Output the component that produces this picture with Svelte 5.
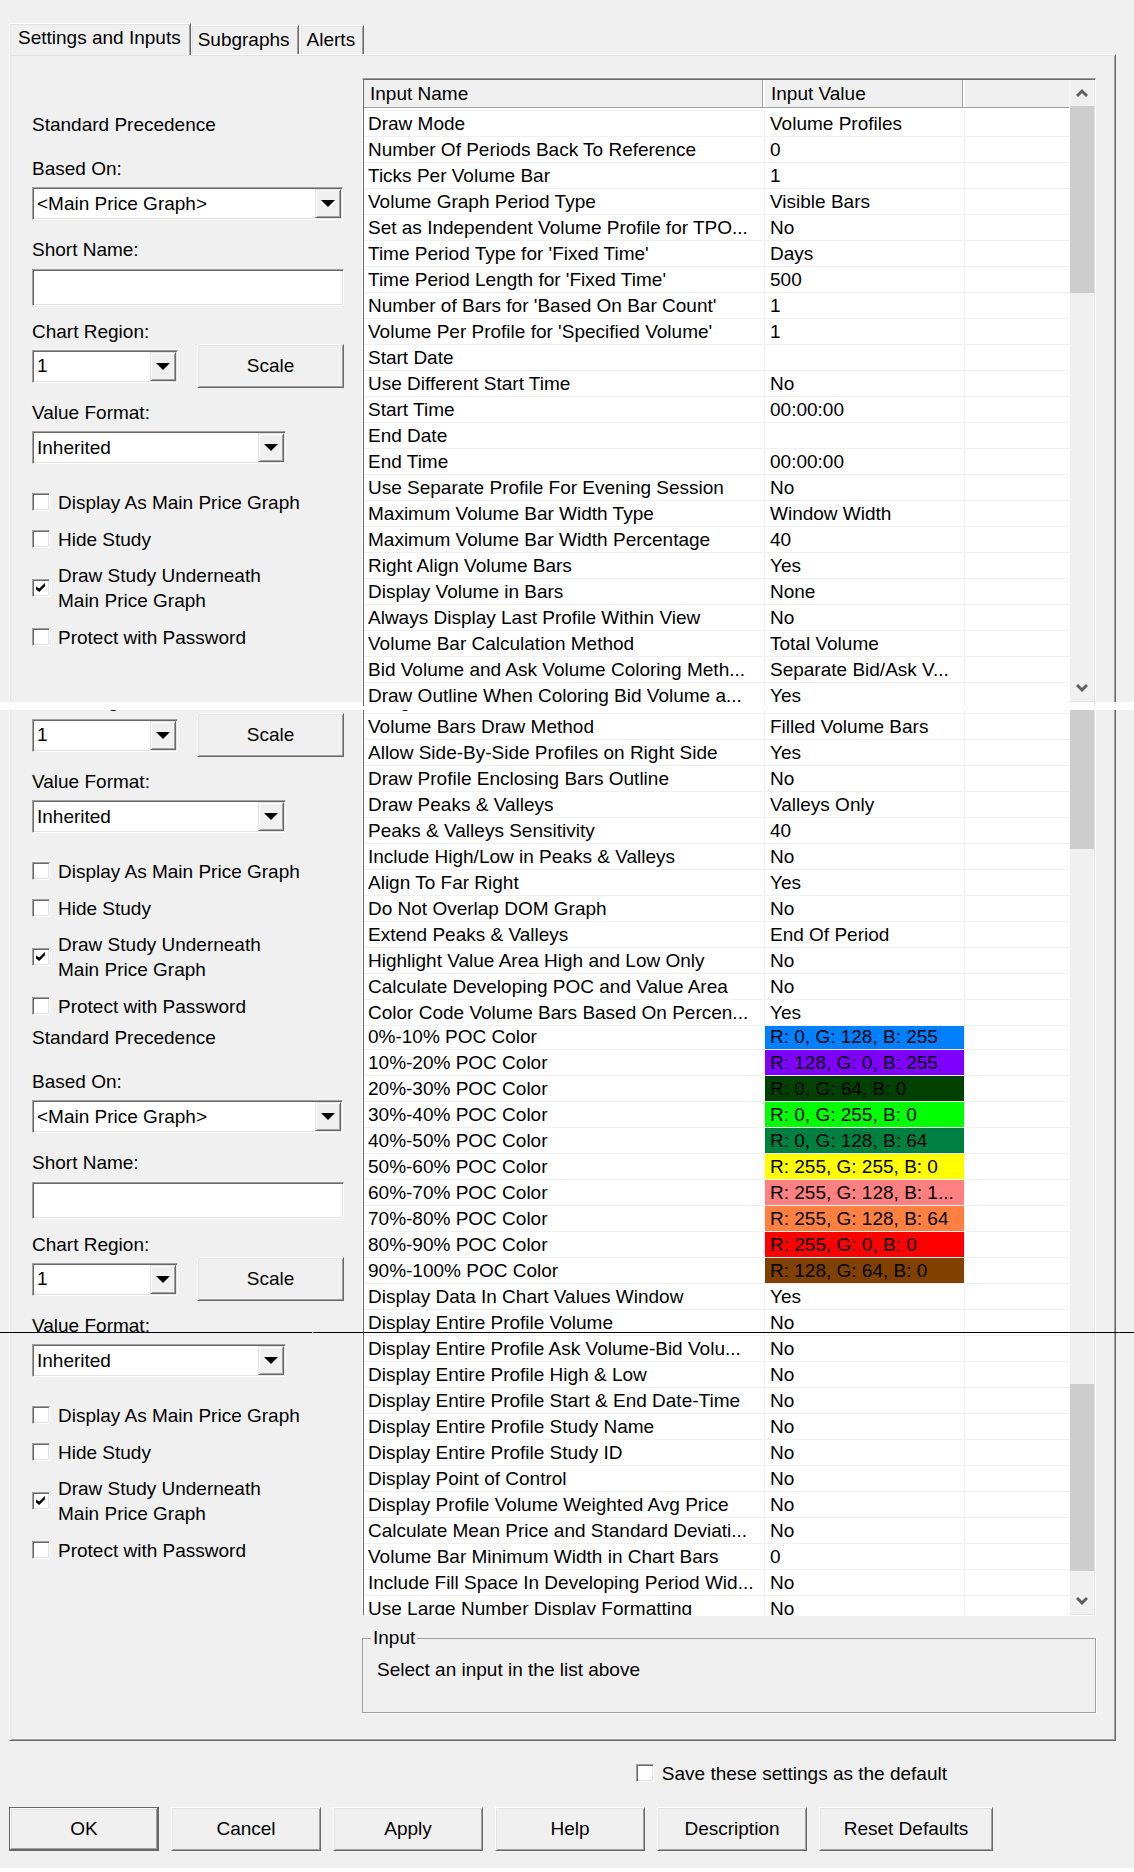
<script>
  const rowsTop = [
    ['Draw Mode', 'Volume Profiles'],
    ['Number Of Periods Back To Reference', '0'],
    ['Ticks Per Volume Bar', '1'],
    ['Volume Graph Period Type', 'Visible Bars'],
    ['Set as Independent Volume Profile for TPO...', 'No'],
    ["Time Period Type for 'Fixed Time'", 'Days'],
    ["Time Period Length for 'Fixed Time'", '500'],
    ["Number of Bars for 'Based On Bar Count'", '1'],
    ["Volume Per Profile for 'Specified Volume'", '1'],
    ['Start Date', ''],
    ['Use Different Start Time', 'No'],
    ['Start Time', '00:00:00'],
    ['End Date', ''],
    ['End Time', '00:00:00'],
    ['Use Separate Profile For Evening Session', 'No'],
    ['Maximum Volume Bar Width Type', 'Window Width'],
    ['Maximum Volume Bar Width Percentage', '40'],
    ['Right Align Volume Bars', 'Yes'],
    ['Display Volume in Bars', 'None'],
    ['Always Display Last Profile Within View', 'No'],
    ['Volume Bar Calculation Method', 'Total Volume'],
    ['Bid Volume and Ask Volume Coloring Meth...', 'Separate Bid/Ask V...'],
    ['Draw Outline When Coloring Bid Volume a...', 'Yes']
  ];
  const rowsMiddle = [
    ['Length', ''],
    ['Volume Bars Draw Method', 'Filled Volume Bars'],
    ['Allow Side-By-Side Profiles on Right Side', 'Yes'],
    ['Draw Profile Enclosing Bars Outline', 'No'],
    ['Draw Peaks & Valleys', 'Valleys Only'],
    ['Peaks & Valleys Sensitivity', '40'],
    ['Include High/Low in Peaks & Valleys', 'No'],
    ['Align To Far Right', 'Yes'],
    ['Do Not Overlap DOM Graph', 'No'],
    ['Extend Peaks & Valleys', 'End Of Period'],
    ['Highlight Value Area High and Low Only', 'No'],
    ['Calculate Developing POC and Value Area', 'No'],
    ['Color Code Volume Bars Based On Percen...', 'Yes']
  ];
  const rowsBottom = [
    ['0%-10% POC Color', 'R: 0, G: 128, B: 255', '#0080ff'],
    ['10%-20% POC Color', 'R: 128, G: 0, B: 255', '#8000ff'],
    ['20%-30% POC Color', 'R: 0, G: 64, B: 0', '#004000'],
    ['30%-40% POC Color', 'R: 0, G: 255, B: 0', '#00ff00'],
    ['40%-50% POC Color', 'R: 0, G: 128, B: 64', '#008040'],
    ['50%-60% POC Color', 'R: 255, G: 255, B: 0', '#ffff00'],
    ['60%-70% POC Color', 'R: 255, G: 128, B: 1...', '#ff8080'],
    ['70%-80% POC Color', 'R: 255, G: 128, B: 64', '#ff8040'],
    ['80%-90% POC Color', 'R: 255, G: 0, B: 0', '#ff0000'],
    ['90%-100% POC Color', 'R: 128, G: 64, B: 0', '#804000'],
    ['Display Data In Chart Values Window', 'Yes'],
    ['Display Entire Profile Volume', 'No'],
    ['Display Entire Profile Ask Volume-Bid Volu...', 'No'],
    ['Display Entire Profile High & Low', 'No'],
    ['Display Entire Profile Start & End Date-Time', 'No'],
    ['Display Entire Profile Study Name', 'No'],
    ['Display Entire Profile Study ID', 'No'],
    ['Display Point of Control', 'No'],
    ['Display Profile Volume Weighted Avg Price', 'No'],
    ['Calculate Mean Price and Standard Deviati...', 'No'],
    ['Volume Bar Minimum Width in Chart Bars', '0'],
    ['Include Fill Space In Developing Period Wid...', 'No'],
    ['Use Large Number Display Formatting', 'No']
  ];
</script>

{#snippet combo(id, value, size)}
  <span class="combo {size}">
    <select {id}><option>{value}</option></select>
    <span class="drop" aria-hidden="true">
      <svg width="14" height="7" viewBox="0 0 14 7"><path d="M0 0H14L7 7Z" fill="#000" /></svg>
    </span>
  </span>
{/snippet}

{#snippet check(text, checked)}
  <label class="check"><input type="checkbox" {checked} /><span>{text}</span></label>
{/snippet}

{#snippet regionFields(part)}
  <label class="caption" for="region-{part}">Chart Region:</label>
  <div class="region">
    {@render combo(`region-${part}`, '1', 'small')}
    <button class="btn scale" type="button">Scale</button>
  </div>
  <label class="caption after-region" for="format-{part}">Value Format:</label>
  {@render combo(`format-${part}`, 'Inherited', 'medium')}
  <div class="checks">
    {@render check('Display As Main Price Graph', false)}
    {@render check('Hide Study', false)}
    {@render check('Draw Study Underneath\nMain Price Graph', true)}
    {@render check('Protect with Password', false)}
  </div>
{/snippet}

{#snippet baseFields(part)}
  <div class="caption">Standard Precedence</div>
  <label class="caption after-title" for="based-{part}">Based On:</label>
  {@render combo(`based-${part}`, '<Main Price Graph>', 'large')}
  <label class="caption after-combo" for="short-{part}">Short Name:</label>
  <input class="text" id="short-{part}" type="text" />
{/snippet}

{#snippet list(rows, header)}
  <table>
    <colgroup><col class="c-name" /><col class="c-value" /><col /></colgroup>
    {#if header}
      <thead><tr><th>Input Name</th><th>Input Value</th><th></th></tr></thead>
    {/if}
    <tbody>
      {#each rows as [name, value, color]}
        <tr><td>{name}</td><td style:background-color={color}>{value}</td><td></td></tr>
      {/each}
    </tbody>
  </table>
{/snippet}

{#snippet chevron(dir)}
  <button class="arrow" type="button" aria-label="Scroll {dir}">
    <svg width="12" height="10" viewBox="0 0 12 10">
      <path d={dir === 'up' ? 'M1 8L6 3L11 8' : 'M1 2L6 7L11 2'} fill="none" stroke="#606060" stroke-width="3" />
    </svg>
  </button>
{/snippet}

<main>
  <div class="tabs" role="tablist">
    <button class="tab active" role="tab" aria-selected="true">Settings and Inputs</button>
    <button class="tab second" role="tab" aria-selected="false">Subgraphs</button>
    <button class="tab" role="tab" aria-selected="false">Alerts</button>
  </div>

  <section class="panel">
    <div class="slice first">
      <form>
        {@render baseFields('a')}
        <div class="gap"></div>
        {@render regionFields('a')}
      </form>
      <div class="pane">
        <div class="view">{@render list(rowsTop, true)}</div>
        <div class="scroll">
          {@render chevron('up')}
          <div class="thumb"></div>
          <div class="track"></div>
          {@render chevron('down')}
        </div>
      </div>
    </div>

    <div class="seam"></div>

    <div class="slice middle">
      <form>{@render regionFields('b')}</form>
      <div class="pane">
        <div class="view">{@render list(rowsMiddle, false)}</div>
        <div class="scroll"><div class="thumb"></div></div>
      </div>
    </div>

    <div class="slice last">
      <form>
        {@render baseFields('c')}
        <div class="gap"></div>
        {@render regionFields('c')}
      </form>
      <div class="pane">
        <div class="view">{@render list(rowsBottom, false)}</div>
        <div class="scroll">
          <div class="track"></div>
          <div class="thumb"></div>
          <div class="space"></div>
          {@render chevron('down')}
        </div>
      </div>
      <div class="rule"></div>
    </div>

    <fieldset>
      <legend>Input</legend>
      <p>Select an input in the list above</p>
    </fieldset>
  </section>

  <div class="save">{@render check('Save these settings as the default', false)}</div>

  <footer>
    <button class="btn default" type="button">OK</button>
    <button class="btn" type="button">Cancel</button>
    <button class="btn" type="button">Apply</button>
    <button class="btn" type="button">Help</button>
    <button class="btn" type="button">Description</button>
    <button class="btn wide" type="button">Reset Defaults</button>
  </footer>
</main>

<style>
  :global(body) {
    margin: 0;
    background: #fff;
  }
  main {
    box-sizing: border-box;
    padding: 23px 18px 17px 9px;
    background: #f0f0f0;
    color: #000;
    font: 19px/24px 'Liberation Sans', Arial, sans-serif;
    overflow: hidden;
  }
  main :global(*) {
    box-sizing: border-box;
  }
  button,
  input,
  select {
    margin: 0;
    padding: 0;
    font: inherit;
    color: inherit;
    border-radius: 0;
  }

  .tabs {
    display: flex;
    align-items: flex-end;
  }
  .tab {
    height: 29px;
    padding: 0 8px 0 6px;
    background: #f0f0f0;
    border: solid;
    border-width: 1px 1px 0;
    border-color: #fff #696969 #fff #fff;
    box-shadow: inset 1px 1px #e3e3e3, inset -1px 0 #a0a0a0;
    white-space: nowrap;
  }
  .tab.second {
    border-left-color: #f0f0f0;
    margin-right: 1px;
  }
  .tab.active {
    position: relative;
    height: 32px;
    margin-bottom: -1px;
    padding: 0 9px 3px 8px;
  }

  .panel {
    border: 1px solid;
    border-color: #fff #696969 #696969 #fff;
    box-shadow: inset 1px 1px #e3e3e3, inset -1px -1px #a0a0a0;
    padding-bottom: 27px;
  }
  .slice {
    display: flex;
    position: relative;
  }
  form {
    display: flex;
    flex-direction: column;
    align-items: flex-start;
    flex: none;
    width: 352px;
    padding: 0 18px 0 22px;
  }
  .first form {
    padding-top: 58px;
  }
  .first {
    margin-bottom: -4px;
    z-index: 1;
  }
  .first .pane {
    margin-top: 23px;
    border-top: 1px solid #a0a0a0;
    box-shadow: inset 1px 1px #696969, inset -1px 0 #e3e3e3;
    padding-top: 1px;
    height: 628px;
  }
  .seam {
    height: 8px;
    margin: 0 -19px 0 -10px;
    background: #fff;
    position: relative;
  }
  .middle {
    height: 316px;
  }
  .middle form {
    justify-content: flex-end;
    overflow: hidden;
    padding-bottom: 7px;
  }
  .middle form > :global(*) {
    flex-shrink: 0;
  }
  .last .pane {
    height: 590px;
    border-bottom: 1px solid #fff;
  }
  .rule {
    position: absolute;
    top: 306px;
    left: -10px;
    right: -19px;
    height: 1px;
    background: linear-gradient(90deg, #000 312px, #f0f0f0 312px, #f0f0f0 313px, #000 313px);
  }

  .caption {
    height: 24px;
    white-space: nowrap;
  }
  .after-title {
    margin-top: 20px;
  }
  .after-combo {
    margin-top: 18px;
  }
  .after-region {
    margin-top: 13px;
  }
  .gap {
    height: 14px;
  }
  .combo,
  .text {
    border: 1px solid;
    border-color: #a0a0a0 #fff #fff #a0a0a0;
    box-shadow: inset 1px 1px #696969, inset -1px -1px #e3e3e3;
    background: #fff;
  }
  .text {
    width: 100%;
    height: 37px;
    margin-top: 7px;
    padding: 0 6px;
    outline: none;
  }
  .combo {
    display: grid;
    height: 33px;
    margin-top: 6px;
    padding: 1px;
  }
  .combo.large {
    width: 311px;
  }
  .combo.medium {
    width: 254px;
  }
  .combo.small {
    width: 146px;
    margin: 0;
  }
  .combo select {
    grid-area: 1 / 1;
    appearance: none;
    width: 100%;
    border: 0;
    padding: 0 28px 0 3px;
    background: transparent;
    outline: none;
  }
  .drop {
    grid-area: 1 / 1;
    justify-self: end;
    display: grid;
    place-items: center;
    width: 26px;
    pointer-events: none;
    background: #f0f0f0;
    border: 1px solid;
    border-color: #e3e3e3 #696969 #696969 #e3e3e3;
    box-shadow: inset 1px 1px #fff, inset -1px -1px #a0a0a0;
  }
  .region {
    display: flex;
    align-items: center;
    justify-content: space-between;
    width: 100%;
    height: 44px;
  }
  .region .scale {
    width: 147px;
  }

  .checks {
    display: flex;
    flex-direction: column;
    gap: 11px;
    margin-top: 25px;
  }
  .check {
    display: flex;
    align-items: center;
    gap: 8px;
    min-height: 26px;
    line-height: 25px;
    white-space: pre-line;
  }
  .check input {
    appearance: none;
    flex: none;
    display: grid;
    width: 18px;
    height: 18px;
    background: #fff;
    border: 1px solid;
    border-color: #a0a0a0 #fff #fff #a0a0a0;
    box-shadow: inset 1px 1px #696969, inset -1px -1px #e3e3e3;
  }
  .check input:checked::before {
    content: '';
    width: 9px;
    height: 9px;
    margin: 3px 0 0 3px;
    background: #000;
    clip-path: polygon(0 38%, 36% 62%, 100% 0, 100% 36%, 36% 100%, 0 72%);
  }

  .pane {
    display: flex;
    flex: 1;
    min-width: 0;
    margin-right: 19px;
    background: #fff;
    border: solid;
    border-width: 0 1px;
    border-color: #a0a0a0 #fff;
    box-shadow: inset 1px 0 #696969, inset -1px 0 #e3e3e3;
    padding: 0 1px;
  }
  .view {
    display: flex;
    flex-direction: column;
    flex: 1;
    min-width: 0;
    overflow: hidden;
  }
  .middle .view {
    justify-content: flex-end;
  }
  .last .view table {
    margin-top: -2px;
  }
  table {
    flex: none;
    width: 100%;
    table-layout: fixed;
    border-collapse: separate;
    border-spacing: 0;
  }
  .c-name {
    width: 401px;
  }
  .c-value {
    width: 200px;
  }
  th {
    height: 28px;
    padding: 1px 5px 0 6px;
    text-align: left;
    font-weight: normal;
    background: #f0f0f0;
    border-bottom: 1px solid #a0a0a0;
    box-shadow: inset -2px 0 #fff, inset -3px 0 #a0a0a0;
  }
  th:last-child {
    box-shadow: none;
  }
  thead::after {
    content: '';
    display: block;
    height: 3px;
    box-shadow: inset 0 -1px #f0f0f0;
  }
  td {
    height: 26px;
    padding: 0 0 0 5px;
    line-height: 25px;
    white-space: nowrap;
    overflow: hidden;
    border: solid #f0f0f0;
    border-width: 0 1px 1px 0;
    background-clip: padding-box;
  }
  td:first-child {
    padding-left: 4px;
  }
  td:last-child {
    border-right: 0;
  }

  .scroll {
    display: flex;
    flex-direction: column;
    flex: none;
    width: 25px;
    background: #f0f0f0;
    border-left: 1px solid #fff;
  }
  .first .scroll {
    margin-bottom: 4px;
    border-bottom: 1px solid #e3e3e3;
  }
  .last .scroll {
    border-bottom: 1px solid #e3e3e3;
  }
  .arrow {
    display: grid;
    place-items: center;
    height: 26px;
    border: 0;
    background: #f0f0f0;
  }
  .thumb {
    height: 187px;
    background: #cdcdcd;
  }
  .middle .thumb {
    height: 139px;
  }
  .track {
    flex: 1;
  }
  .space {
    height: 17px;
  }

  fieldset {
    min-width: 0;
    height: 87px;
    margin: 10px 19px 0 352px;
    padding: 8px 14px 0;
    border: 1px solid #a0a0a0;
    box-shadow: 1px 1px #fff;
  }
  legend {
    margin-left: -6px;
    padding: 0 2px;
  }
  p {
    margin: 0;
  }

  .save {
    display: flex;
    justify-content: flex-end;
    margin: 19px 169px 0 0;
  }
  footer {
    display: flex;
    gap: 12px;
    margin-top: 21px;
  }
  .btn {
    width: 150px;
    height: 44px;
    background: #f0f0f0;
    border: 1px solid;
    border-color: #fff #696969 #696969 #fff;
    box-shadow: inset 1px 1px #e3e3e3, inset -1px -1px #a0a0a0;
  }
  .btn.default {
    border-color: #696969;
    box-shadow: inset -1px -1px #696969, inset 1px 1px #fff, inset -2px -2px #a0a0a0, inset 2px 2px #e3e3e3;
  }
  .btn.wide {
    width: 174px;
  }
</style>
